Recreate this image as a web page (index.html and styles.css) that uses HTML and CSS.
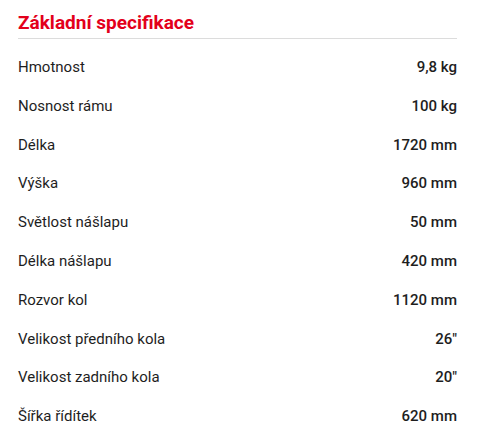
FILE: index.html
```html
<!DOCTYPE html>
<html lang="cs">
<head>
<meta charset="utf-8">
<link rel="stylesheet" href="styles.css">
</head>
<body>
<section class="specs">
  <h2 class="specs-title">Základní specifikace</h2>
  <dl class="specs-list">
    <div class="row"><dt>Hmotnost</dt><dd>9,8 kg</dd></div>
    <div class="row"><dt>Nosnost rámu</dt><dd>100 kg</dd></div>
    <div class="row"><dt>Délka</dt><dd>1720 mm</dd></div>
    <div class="row"><dt>Výška</dt><dd>960 mm</dd></div>
    <div class="row"><dt>Světlost nášlapu</dt><dd>50 mm</dd></div>
    <div class="row"><dt>Délka nášlapu</dt><dd>420 mm</dd></div>
    <div class="row"><dt>Rozvor kol</dt><dd>1120 mm</dd></div>
    <div class="row"><dt>Velikost předního kola</dt><dd>26"</dd></div>
    <div class="row"><dt>Velikost zadního kola</dt><dd>20"</dd></div>
    <div class="row"><dt>Šířka řídítek</dt><dd>620 mm</dd></div>
  </dl>
</section>
</body>
</html>
```

FILE: styles.css
```css
html, body {
  margin: 0;
  padding: 0;
  background: #fff;
}
body {
  font-family: Roboto, "Liberation Sans", sans-serif;
  color: #1e1e1e;
}
.specs {
  width: 439px;
  margin-left: 18px;
}
.specs-title {
  margin: 0;
  padding-top: 12px;
  padding-bottom: 4px;
  font-size: 19px;
  line-height: 22px;
  font-weight: 700;
  color: #e3001b;
  border-bottom: 1px solid #dcdcdc;
}
.specs-list {
  margin: 0;
  padding-top: 9px;
}
.row {
  display: flex;
  justify-content: space-between;
  align-items: baseline;
  height: 38.8px;
  line-height: 38.8px;
  font-size: 15px;
}
.row dt {
  margin: 0;
  font-weight: 400;
}
.row dd {
  margin: 0;
  font-weight: 500;
}
```
